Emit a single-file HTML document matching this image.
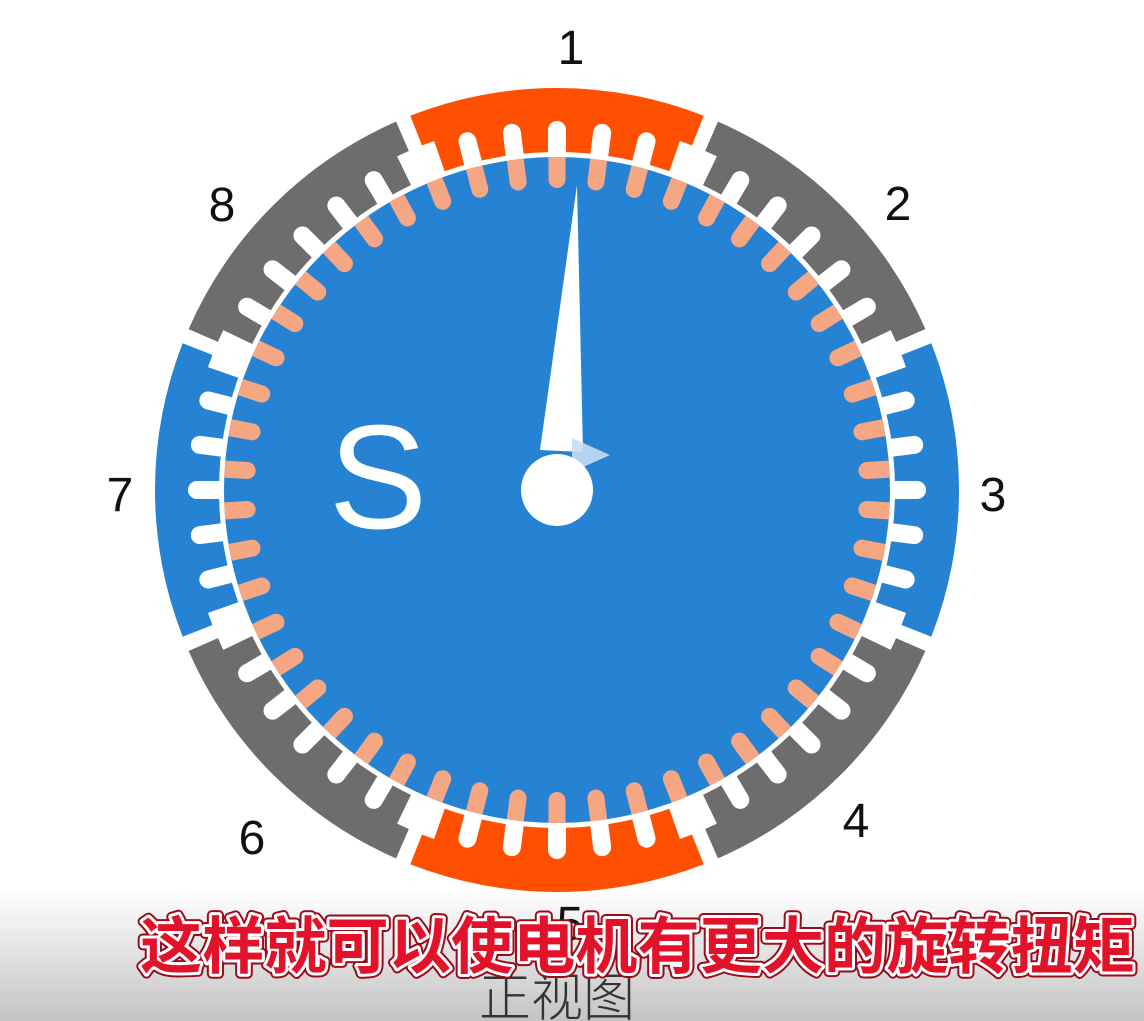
<!DOCTYPE html>
<html><head><meta charset="utf-8"><style>
html,body{margin:0;padding:0;width:1144px;height:1021px;overflow:hidden;background:#fff}
svg{display:block}
</style></head><body>
<svg width="1144" height="1021" viewBox="0 0 1144 1021" xmlns="http://www.w3.org/2000/svg" xmlns:xlink="http://www.w3.org/1999/xlink">
<defs>
<linearGradient id="bg" x1="0" y1="0" x2="0" y2="1">
<stop offset="0" stop-color="#ffffff"/><stop offset="0.87" stop-color="#ffffff"/><stop offset="1" stop-color="#c4c4c4"/>
</linearGradient>
<path id="seg" d="M410.3 115.7 A402 402 0 0 1 703.7 115.7 L692.0 145.5 A370 370 0 0 0 679.9 141.0 L669.3 171.2 A338 338 0 0 0 444.7 171.2 L434.1 141.0 A370 370 0 0 0 422.0 145.5 Z"/>
<path id="st" d="M548 162 V130 A9 9 0 0 1 566 130 V162 Z" fill="#fff"/>
<path id="rt" d="M548.5 157 V179.5 A8.5 8.5 0 0 0 565.5 179.5 V157 Z" fill="#f5a683"/>
<g id="pt">
<use xlink:href="#st" href="#st" transform="rotate(-14.4 557 490)"/>
<use xlink:href="#st" href="#st" transform="rotate(-7.2 557 490)"/>
<use xlink:href="#st" href="#st"/>
<use xlink:href="#st" href="#st" transform="rotate(7.2 557 490)"/>
<use xlink:href="#st" href="#st" transform="rotate(14.4 557 490)"/>
</g>
</defs>
<rect width="1144" height="1021" fill="url(#bg)"/>
<use xlink:href="#seg" href="#seg" fill="#ff4f00"/>
<use xlink:href="#seg" href="#seg" fill="#6d6d6d" transform="rotate(45 557 490)"/>
<use xlink:href="#seg" href="#seg" fill="#2683d3" transform="rotate(90 557 490)"/>
<use xlink:href="#seg" href="#seg" fill="#6d6d6d" transform="rotate(135 557 490)"/>
<use xlink:href="#seg" href="#seg" fill="#ff4f00" transform="rotate(180 557 490)"/>
<use xlink:href="#seg" href="#seg" fill="#6d6d6d" transform="rotate(225 557 490)"/>
<use xlink:href="#seg" href="#seg" fill="#2683d3" transform="rotate(270 557 490)"/>
<use xlink:href="#seg" href="#seg" fill="#6d6d6d" transform="rotate(315 557 490)"/>
<use xlink:href="#pt" href="#pt"/>
<use xlink:href="#pt" href="#pt" transform="rotate(45 557 490)"/>
<use xlink:href="#pt" href="#pt" transform="rotate(90 557 490)"/>
<use xlink:href="#pt" href="#pt" transform="rotate(135 557 490)"/>
<use xlink:href="#pt" href="#pt" transform="rotate(180 557 490)"/>
<use xlink:href="#pt" href="#pt" transform="rotate(225 557 490)"/>
<use xlink:href="#pt" href="#pt" transform="rotate(270 557 490)"/>
<use xlink:href="#pt" href="#pt" transform="rotate(315 557 490)"/>
<circle cx="557" cy="490" r="333" fill="#2683d3"/>
<g>
<use xlink:href="#rt" href="#rt"/>
<use xlink:href="#rt" href="#rt" transform="rotate(7.2 557 490)"/>
<use xlink:href="#rt" href="#rt" transform="rotate(14.4 557 490)"/>
<use xlink:href="#rt" href="#rt" transform="rotate(21.6 557 490)"/>
<use xlink:href="#rt" href="#rt" transform="rotate(28.8 557 490)"/>
<use xlink:href="#rt" href="#rt" transform="rotate(36 557 490)"/>
<use xlink:href="#rt" href="#rt" transform="rotate(43.2 557 490)"/>
<use xlink:href="#rt" href="#rt" transform="rotate(50.4 557 490)"/>
<use xlink:href="#rt" href="#rt" transform="rotate(57.6 557 490)"/>
<use xlink:href="#rt" href="#rt" transform="rotate(64.8 557 490)"/>
<use xlink:href="#rt" href="#rt" transform="rotate(72 557 490)"/>
<use xlink:href="#rt" href="#rt" transform="rotate(79.2 557 490)"/>
<use xlink:href="#rt" href="#rt" transform="rotate(86.4 557 490)"/>
<use xlink:href="#rt" href="#rt" transform="rotate(93.6 557 490)"/>
<use xlink:href="#rt" href="#rt" transform="rotate(100.8 557 490)"/>
<use xlink:href="#rt" href="#rt" transform="rotate(108 557 490)"/>
<use xlink:href="#rt" href="#rt" transform="rotate(115.2 557 490)"/>
<use xlink:href="#rt" href="#rt" transform="rotate(122.4 557 490)"/>
<use xlink:href="#rt" href="#rt" transform="rotate(129.6 557 490)"/>
<use xlink:href="#rt" href="#rt" transform="rotate(136.8 557 490)"/>
<use xlink:href="#rt" href="#rt" transform="rotate(144 557 490)"/>
<use xlink:href="#rt" href="#rt" transform="rotate(151.2 557 490)"/>
<use xlink:href="#rt" href="#rt" transform="rotate(158.4 557 490)"/>
<use xlink:href="#rt" href="#rt" transform="rotate(165.6 557 490)"/>
<use xlink:href="#rt" href="#rt" transform="rotate(172.8 557 490)"/>
<use xlink:href="#rt" href="#rt" transform="rotate(180 557 490)"/>
<use xlink:href="#rt" href="#rt" transform="rotate(187.2 557 490)"/>
<use xlink:href="#rt" href="#rt" transform="rotate(194.4 557 490)"/>
<use xlink:href="#rt" href="#rt" transform="rotate(201.6 557 490)"/>
<use xlink:href="#rt" href="#rt" transform="rotate(208.8 557 490)"/>
<use xlink:href="#rt" href="#rt" transform="rotate(216 557 490)"/>
<use xlink:href="#rt" href="#rt" transform="rotate(223.2 557 490)"/>
<use xlink:href="#rt" href="#rt" transform="rotate(230.4 557 490)"/>
<use xlink:href="#rt" href="#rt" transform="rotate(237.6 557 490)"/>
<use xlink:href="#rt" href="#rt" transform="rotate(244.8 557 490)"/>
<use xlink:href="#rt" href="#rt" transform="rotate(252 557 490)"/>
<use xlink:href="#rt" href="#rt" transform="rotate(259.2 557 490)"/>
<use xlink:href="#rt" href="#rt" transform="rotate(266.4 557 490)"/>
<use xlink:href="#rt" href="#rt" transform="rotate(273.6 557 490)"/>
<use xlink:href="#rt" href="#rt" transform="rotate(280.8 557 490)"/>
<use xlink:href="#rt" href="#rt" transform="rotate(288 557 490)"/>
<use xlink:href="#rt" href="#rt" transform="rotate(295.2 557 490)"/>
<use xlink:href="#rt" href="#rt" transform="rotate(302.4 557 490)"/>
<use xlink:href="#rt" href="#rt" transform="rotate(309.6 557 490)"/>
<use xlink:href="#rt" href="#rt" transform="rotate(316.8 557 490)"/>
<use xlink:href="#rt" href="#rt" transform="rotate(324 557 490)"/>
<use xlink:href="#rt" href="#rt" transform="rotate(331.2 557 490)"/>
<use xlink:href="#rt" href="#rt" transform="rotate(338.4 557 490)"/>
<use xlink:href="#rt" href="#rt" transform="rotate(345.6 557 490)"/>
<use xlink:href="#rt" href="#rt" transform="rotate(352.8 557 490)"/>
</g>
<text x="378" y="528" font-family="Liberation Sans, sans-serif" font-size="148" fill="#fff" text-anchor="middle">S</text>
<polygon points="577,185 540,450 583,452" fill="#fff"/>
<polygon points="572,438 610,455 572,472" fill="#c6dcf2" opacity="0.9"/>
<circle cx="557" cy="490" r="36" fill="#fff"/>
<g font-family="Liberation Sans, sans-serif" font-size="48" fill="#111" text-anchor="middle">
<text x="571" y="64">1</text>
<text x="898" y="220">2</text>
<text x="993" y="511">3</text>
<text x="856" y="837">4</text>
<text x="570" y="940">5</text>
<text x="252" y="854">6</text>
<text x="120" y="511">7</text>
<text x="222" y="221">8</text>
</g>
<text x="557" y="1016" font-family="Liberation Sans, 'Noto Sans CJK SC', sans-serif" font-size="52" fill="#333" text-anchor="middle" font-weight="300">正视图</text>
<g font-family="Liberation Sans, 'Noto Sans CJK SC', sans-serif" font-size="62" font-weight="bold">
<text x="140" y="968" textLength="995" lengthAdjust="spacingAndGlyphs" fill="none" stroke="#9a0a1a" stroke-width="10" stroke-linejoin="round">这样就可以使电机有更大的旋转扭矩</text>
<text x="140" y="968" textLength="995" lengthAdjust="spacingAndGlyphs" fill="none" stroke="#ffffff" stroke-width="6" stroke-linejoin="round">这样就可以使电机有更大的旋转扭矩</text>
<text x="140" y="968" textLength="995" lengthAdjust="spacingAndGlyphs" fill="#e3122b">这样就可以使电机有更大的旋转扭矩</text>
</g>
</svg>
</body></html>
